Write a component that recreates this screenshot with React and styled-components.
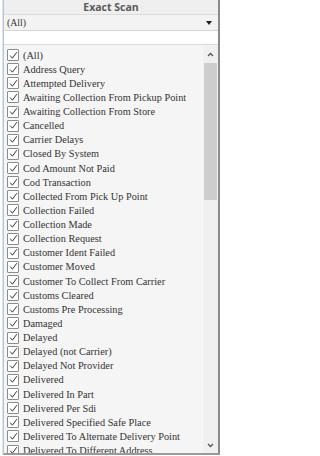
import React from "react";
import styled, { createGlobalStyle } from "styled-components";

const GlobalStyle = createGlobalStyle`
    html, body {
        margin: 0;
        padding: 0;
        background: #ffffff;
    }
`;

const Page = styled.div`
    width: 220px;
    height: 456px;
    display: flex;
    box-sizing: border-box;
    padding-left: 3px;
`;

const Panel = styled.div`
    flex: 1;
    display: flex;
    flex-direction: column;
    height: 455px;
    box-sizing: border-box;
    border-left: 1px solid #c4c4c4;
    border-right: 2px solid #8a8a8a;
    border-bottom: 2px solid #9a9a9a;
    box-shadow: -1px 0 0 #cfe8f2;
    background: #f5f5f5;
`;

const Header = styled.div`
    height: 14px;
    line-height: 14px;
    background: #efefef;
    border-bottom: 1px solid #dcdcdc;
    text-align: center;
    font-family: "Open Sans", "Liberation Sans", sans-serif;
    font-weight: 700;
    font-size: 10.5px;
    color: #5a5a5a;
`;

const Select = styled.div`
    height: 15px;
    display: flex;
    align-items: center;
    justify-content: space-between;
    padding: 0 6px 0 3px;
    background: #f3f3f3;
    border-bottom: 1px solid #d6d6d6;
    font-family: "Liberation Serif", serif;
    font-size: 9.8px;
    color: #333;
`;

const Caret = styled.span`
    width: 0;
    height: 0;
    border-left: 3px solid transparent;
    border-right: 3px solid transparent;
    border-top: 4px solid #222;
`;

const SearchBox = styled.div`
    height: 13px;
    background: #ffffff;
    border-bottom: 1px solid #d9d9d9;
`;

const ListArea = styled.div`
    flex: 1;
    display: flex;
    overflow: hidden;
`;

const List = styled.div`
    flex: 1;
    padding-top: 3px;
    overflow: hidden;
`;

const Row = styled.div`
    height: 14.14px;
    display: flex;
    align-items: center;
    padding-left: 3px;
    white-space: nowrap;
    font-family: "Liberation Serif", serif;
    font-size: 10.3px;
    color: #333;
`;

const Box = styled.span`
    width: 10px;
    height: 10px;
    flex: none;
    border: 1px solid #8c8c8c;
    border-radius: 1px;
    background: #fff;
    margin-right: 4px;
    display: flex;
    align-items: center;
    justify-content: center;
`;

const Scrollbar = styled.div`
    width: 15px;
    display: flex;
    flex-direction: column;
    background: #f0f0f0;
    border-left: 1px solid #f7f7f7;
`;

const ArrowButton = styled.div`
    height: ${(p) => p.h}px;
    display: flex;
    align-items: center;
    justify-content: center;
    color: #555;
`;

const Thumb = styled.div`
    height: 137px;
    margin: 0 1px;
    background: #cdcdcd;
`;

const Track = styled.div`
    flex: 1;
`;

const items = [
    "(All)",
    "Address Query",
    "Attempted Delivery",
    "Awaiting Collection From Pickup Point",
    "Awaiting Collection From Store",
    "Cancelled",
    "Carrier Delays",
    "Closed By System",
    "Cod Amount Not Paid",
    "Cod Transaction",
    "Collected From Pick Up Point",
    "Collection Failed",
    "Collection Made",
    "Collection Request",
    "Customer Ident Failed",
    "Customer Moved",
    "Customer To Collect From Carrier",
    "Customs Cleared",
    "Customs Pre Processing",
    "Damaged",
    "Delayed",
    "Delayed (not Carrier)",
    "Delayed Not Provider",
    "Delivered",
    "Delivered In Part",
    "Delivered Per Sdi",
    "Delivered Specified Safe Place",
    "Delivered To Alternate Delivery Point",
    "Delivered To Different Address"
];

const Check = () => (
    <svg width="9" height="9" viewBox="0 0 9 9">
        <path d="M1.2 4.6 L3.4 7.2 L7.8 1.2" fill="none" stroke="#333" strokeWidth="1" />
    </svg>
);

const Chevron = ({ up }) => (
    <svg width="7" height="5" viewBox="0 0 7 5">
        <path d={up ? "M1 4 L3.5 1.5 L6 4" : "M1 1 L3.5 3.5 L6 1"} fill="none" stroke="#555" strokeWidth="1.3" />
    </svg>
);

const App = () => {
    return (
        <>
            <GlobalStyle />
            <Page>
                <Panel>
                    <Header>Exact Scan</Header>
                    <Select>
                        <span>(All)</span>
                        <Caret />
                    </Select>
                    <SearchBox />
                    <ListArea>
                        <List>
                            {items.map((item) => (
                                <Row key={item}>
                                    <Box>
                                        <Check />
                                    </Box>
                                    {item}
                                </Row>
                            ))}
                        </List>
                        <Scrollbar>
                            <ArrowButton h={18}>
                                <Chevron up />
                            </ArrowButton>
                            <Thumb />
                            <Track />
                            <ArrowButton h={16}>
                                <Chevron />
                            </ArrowButton>
                        </Scrollbar>
                    </ListArea>
                </Panel>
            </Page>
        </>
    );
};

export default App;
